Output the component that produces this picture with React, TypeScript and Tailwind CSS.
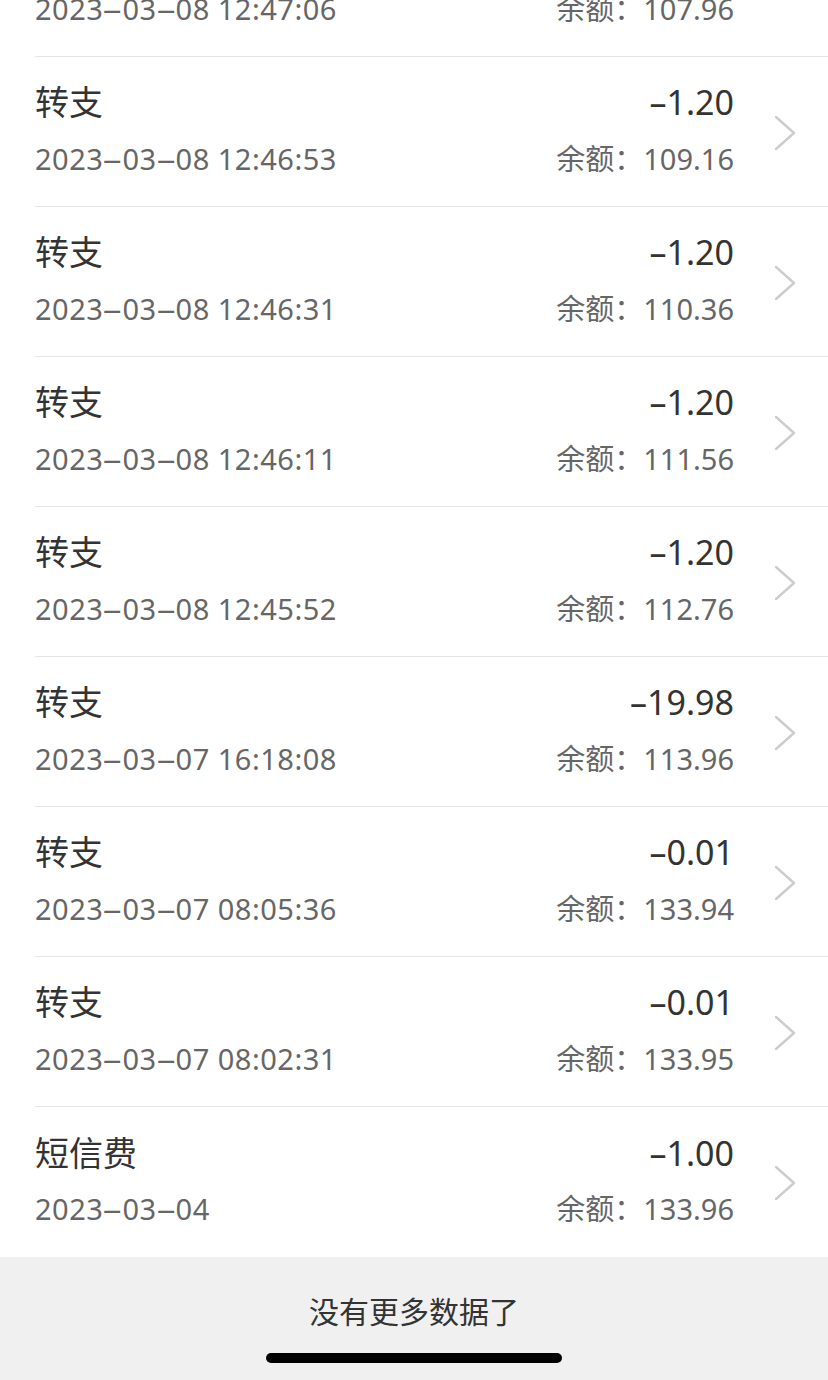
import React from 'react';

const records = [
  { title: '转支', time: '2023-03-08 12:47:06', amount: '-1.20', balance: '107.96' },
  { title: '转支', time: '2023-03-08 12:46:53', amount: '-1.20', balance: '109.16' },
  { title: '转支', time: '2023-03-08 12:46:31', amount: '-1.20', balance: '110.36' },
  { title: '转支', time: '2023-03-08 12:46:11', amount: '-1.20', balance: '111.56' },
  { title: '转支', time: '2023-03-08 12:45:52', amount: '-1.20', balance: '112.76' },
  { title: '转支', time: '2023-03-07 16:18:08', amount: '-19.98', balance: '113.96' },
  { title: '转支', time: '2023-03-07 08:05:36', amount: '-0.01', balance: '133.94' },
  { title: '转支', time: '2023-03-07 08:02:31', amount: '-0.01', balance: '133.95' },
  { title: '短信费', time: '2023-03-04', amount: '-1.00', balance: '133.96' },
];

const font = { fontFamily: '"Noto Sans", "Noto Sans CJK SC", sans-serif' };

const Chevron = () => (
  <svg width="24" height="36" viewBox="0 0 24 36" fill="none" className="shrink-0">
    <path d="M3 2 L21 18 L3 34" stroke="#cdcdcd" strokeWidth="2.4" strokeLinecap="round" strokeLinejoin="round" />
  </svg>
);

// date parts joined by a wider dash, like the iOS font
const DateText: React.FC<{ value: string }> = ({ value }) => {
  const [d, t] = value.split(' ');
  const parts = d.split('-');
  return (
    <span className="text-[29px] text-[#666] tracking-[0.5px]">
      {parts.map((p, i) => (
        <React.Fragment key={i}>
          {i > 0 && <span className="inline-block mx-[2px] scale-x-[1.3]">–</span>}
          {p}
        </React.Fragment>
      ))}
      {t && <span className="ml-[8px]">{t}</span>}
    </span>
  );
};

const Row: React.FC<{ r: typeof records[number]; last: boolean }> = ({ r, last }) => (
  <div className="pl-[35px]">
    <div className={`flex items-center h-[150px] pr-[31px] ${last ? '' : 'border-b border-[#e5e5e5]'}`}>
      <div className="flex-1 flex flex-col mb-[4px]">
        <div className="flex justify-between items-center h-[44px]">
          <span className="text-[34px] text-[#333]">{r.title}</span>
          <span className="text-[34px] text-[#333]">{r.amount.replace('-', '–')}</span>
        </div>
        <div className="flex justify-between items-center h-[40px] mt-[14px]">
          <DateText value={r.time} />
          <span className="text-[29px] text-[#666]">余额：{r.balance}</span>
        </div>
      </div>
      <div className="ml-[39px] mt-[2px]">
        <Chevron />
      </div>
    </div>
  </div>
);

export default function App() {
  return (
    <div className="w-[828px] h-[1380px] overflow-hidden bg-white flex flex-col" style={font}>
      <div className="-mt-[93px] bg-white">
        {records.map((r, i) => (
          <Row key={i} r={r} last={i === records.length - 1} />
        ))}
      </div>
      <div className="flex-1 bg-[#f0f0f0] flex flex-col items-center">
        <div className="mt-[36px] text-[30px] text-[#333] leading-[38px]">没有更多数据了</div>
        <div className="mt-[22px] w-[296px] h-[10px] rounded-full bg-black" />
      </div>
    </div>
  );
}
